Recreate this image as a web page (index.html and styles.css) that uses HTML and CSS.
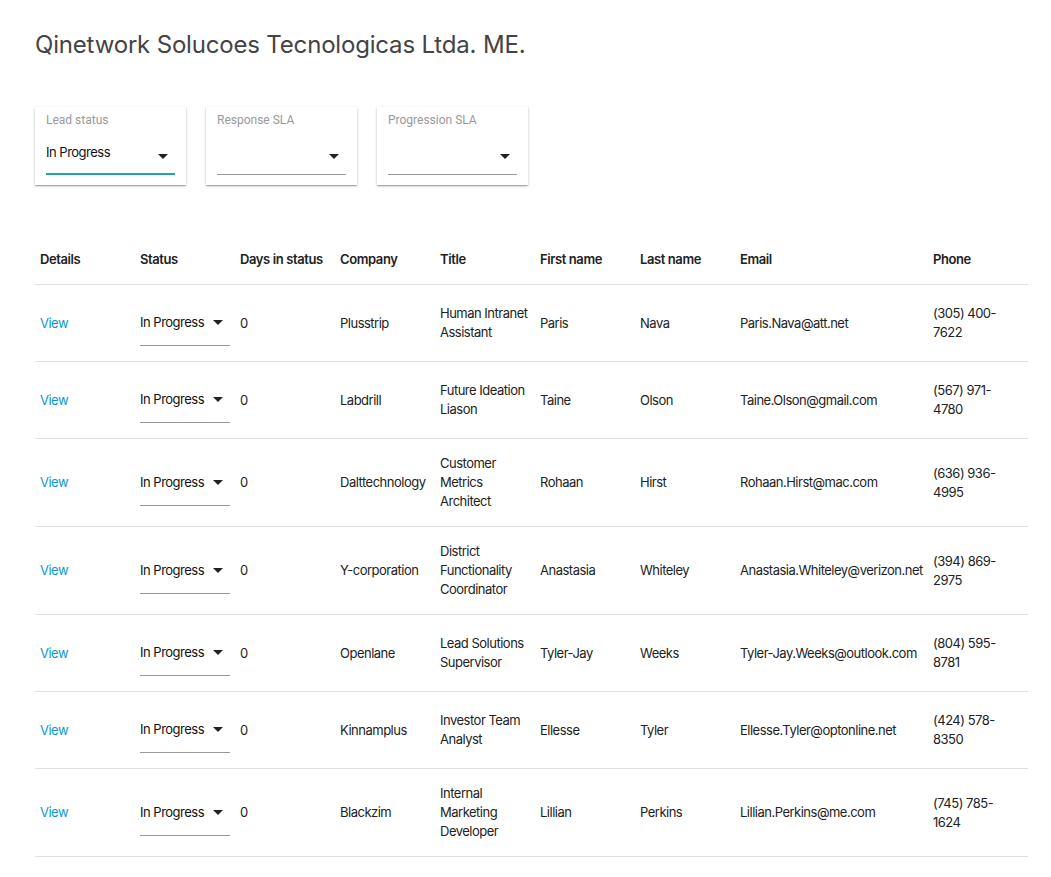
FILE: index.html
```html
<!DOCTYPE html>
<html>
<head>
<meta charset="utf-8">
<link rel="stylesheet" href="styles.css">
</head>
<body>
<div class="page">
  <h1 class="title">Qinetwork Solucoes Tecnologicas Ltda. ME.</h1>
  <div class="filters">
    <div class="card">
      <div class="label">Lead status</div>
      <div class="field active"><span>In Progress</span><svg class="arrow" viewBox="7 10 10 5"><path d="M7 10l5 5 5-5z"/></svg></div>
    </div>
    <div class="card">
      <div class="label">Response SLA</div>
      <div class="field"><span></span><svg class="arrow" viewBox="7 10 10 5"><path d="M7 10l5 5 5-5z"/></svg></div>
    </div>
    <div class="card">
      <div class="label">Progression SLA</div>
      <div class="field"><span></span><svg class="arrow" viewBox="7 10 10 5"><path d="M7 10l5 5 5-5z"/></svg></div>
    </div>
  </div>
  <table class="leads">
    <thead>
      <tr><th class="w100">Details</th><th class="w100">Status</th><th class="w100">Days in status</th><th class="w100">Company</th><th class="w100">Title</th><th class="w100">First name</th><th class="w100">Last name</th><th class="wemail">Email</th><th class="wphone">Phone</th></tr>
    </thead>
    <tbody>
      <tr><td><a class="view">View</a></td><td><div class="sel"><span>In Progress</span><svg class="arrow" viewBox="7 10 10 5"><path d="M7 10l5 5 5-5z"/></svg></div></td><td>0</td><td>Plusstrip</td><td>Human Intranet Assistant</td><td>Paris</td><td>Nava</td><td>Paris.Nava@att.net</td><td class="phone">(305) 400-7622</td></tr>
      <tr><td><a class="view">View</a></td><td><div class="sel"><span>In Progress</span><svg class="arrow" viewBox="7 10 10 5"><path d="M7 10l5 5 5-5z"/></svg></div></td><td>0</td><td>Labdrill</td><td>Future Ideation Liason</td><td>Taine</td><td>Olson</td><td>Taine.Olson@gmail.com</td><td class="phone">(567) 971-4780</td></tr>
      <tr><td><a class="view">View</a></td><td><div class="sel"><span>In Progress</span><svg class="arrow" viewBox="7 10 10 5"><path d="M7 10l5 5 5-5z"/></svg></div></td><td>0</td><td>Dalttechnology</td><td>Customer Metrics Architect</td><td>Rohaan</td><td>Hirst</td><td>Rohaan.Hirst@mac.com</td><td class="phone">(636) 936-4995</td></tr>
      <tr><td><a class="view">View</a></td><td><div class="sel"><span>In Progress</span><svg class="arrow" viewBox="7 10 10 5"><path d="M7 10l5 5 5-5z"/></svg></div></td><td>0</td><td>Y-corporation</td><td>District Functionality Coordinator</td><td>Anastasia</td><td>Whiteley</td><td>Anastasia.Whiteley@verizon.net</td><td class="phone">(394) 869-2975</td></tr>
      <tr><td><a class="view">View</a></td><td><div class="sel"><span>In Progress</span><svg class="arrow" viewBox="7 10 10 5"><path d="M7 10l5 5 5-5z"/></svg></div></td><td>0</td><td>Openlane</td><td>Lead Solutions Supervisor</td><td>Tyler-Jay</td><td>Weeks</td><td>Tyler-Jay.Weeks@outlook.com</td><td class="phone">(804) 595-8781</td></tr>
      <tr><td><a class="view">View</a></td><td><div class="sel"><span>In Progress</span><svg class="arrow" viewBox="7 10 10 5"><path d="M7 10l5 5 5-5z"/></svg></div></td><td>0</td><td>Kinnamplus</td><td>Investor Team Analyst</td><td>Ellesse</td><td>Tyler</td><td>Ellesse.Tyler@optonline.net</td><td class="phone">(424) 578-8350</td></tr>
      <tr><td><a class="view">View</a></td><td><div class="sel"><span>In Progress</span><svg class="arrow" viewBox="7 10 10 5"><path d="M7 10l5 5 5-5z"/></svg></div></td><td>0</td><td>Blackzim</td><td>Internal Marketing Developer</td><td>Lillian</td><td>Perkins</td><td>Lillian.Perkins@me.com</td><td class="phone">(745) 785-1624</td></tr>
    </tbody>
  </table>
</div>
</body>
</html>
```

FILE: styles.css
```css
html, body {
  margin: 0;
  padding: 0;
  background: #fff;
}
.page {
  padding: 31px 23px 0 35px;
  font-family: Inter, "Liberation Sans", sans-serif;
  color: #222;
}
.title {
  margin: 0;
  font-family: Inter, "Liberation Sans", sans-serif;
  font-weight: 400;
  font-size: 24px;
  line-height: 28px;
  letter-spacing: -0.18px;
  color: #444;
}
.filters {
  display: flex;
  gap: 20px;
  margin-top: 48px;
}
.card {
  width: 151px;
  box-sizing: border-box;
  padding: 6px 11px 10px;
  background: #fff;
  box-shadow: 0 1px 3px rgba(0,0,0,0.2), 0 1px 1px rgba(0,0,0,0.14), 0 2px 1px -1px rgba(0,0,0,0.12);
}
.label {
  font-family: Roboto, "Liberation Sans", sans-serif;
  font-size: 12px;
  line-height: 14px;
  color: #999;
}
.field {
  margin-top: 11px;
  height: 37px;
  box-sizing: border-box;
  border-bottom: 1px solid #999;
  display: flex;
  align-items: flex-start;
  justify-content: space-between;
  font-size: 13px;
  line-height: 19px;
  letter-spacing: -0.5px;
  color: #111;
  padding-top: 5px;
}
.field.active {
  border-bottom: 2px solid #26a69a;
}
.field .arrow {
  width: 10px;
  height: 5px;
  margin-top: 11px;
  margin-right: 7px;
  fill: #222;
}
.leads {
  margin-top: 50px;
  width: 993px;
  border-collapse: collapse;
  table-layout: fixed;
  font-size: 13px;
  line-height: 19px;
  letter-spacing: -0.5px;
}
.w100 { width: 100px; }
.wemail { width: 193px; }
.wphone { width: 100px; }
.leads th {
  box-sizing: border-box;
  text-align: left;
  font-weight: 600;
  letter-spacing: -0.4px;
  padding: 15px 0 15px 5px;
  border-bottom: 1px solid #e0e0e0;
  vertical-align: middle;
  white-space: nowrap;
}
.leads td {
  padding: 15px 0 15px 5px;
  border-bottom: 1px solid #e0e0e0;
  vertical-align: middle;
}
.leads td.phone {
  padding-right: 12px;
}
.view {
  color: #0a97d9;
  cursor: pointer;
}
.sel {
  width: 90px;
  height: 46px;
  box-sizing: border-box;
  border-bottom: 1px solid #999;
  display: flex;
  align-items: center;
  justify-content: space-between;
  color: #111;
}
.sel .arrow {
  width: 10px;
  height: 5px;
  margin-right: 7px;
  fill: #222;
}
```
